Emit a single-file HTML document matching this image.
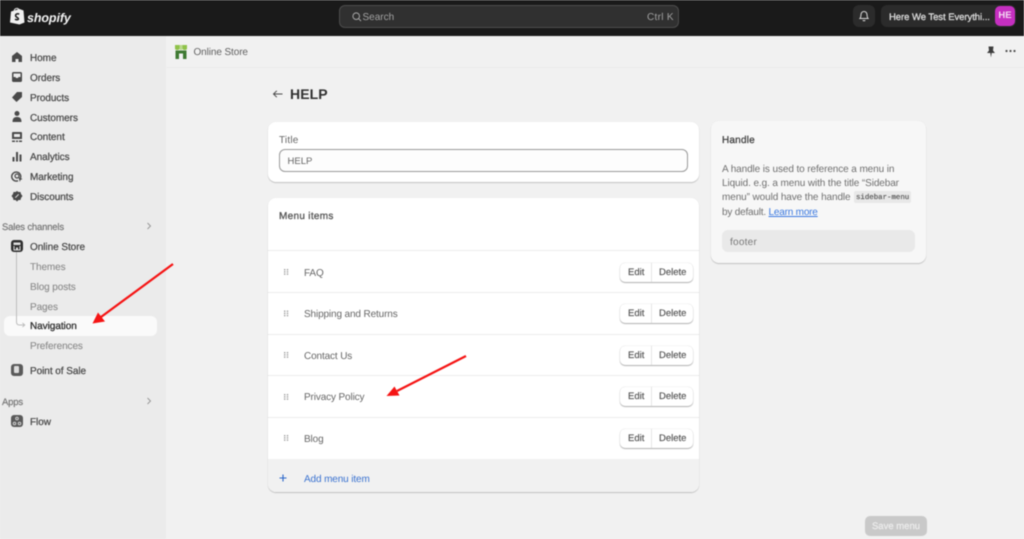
<!DOCTYPE html>
<html><head><meta charset="utf-8"><title>Shopify - Navigation</title>
<style>
html,body{margin:0;padding:0}
body{width:1024px;height:539px;overflow:hidden;background:#f1f1f1;position:relative;font-family:"Liberation Sans",sans-serif;text-rendering:geometricPrecision}
#w{position:absolute;left:0;top:0;width:1024px;height:539px;filter:blur(.4px);overflow:hidden}
.a{position:absolute}
.t{position:absolute;white-space:nowrap;line-height:14px;font-size:10px;color:#5c5c5c;margin-top:1.5px}
.n{color:#4a4a4a;-webkit-text-stroke:.25px #4a4a4a;letter-spacing:-.05px}
.s{color:#8a8a8a;-webkit-text-stroke:.1px #8a8a8a;letter-spacing:-.1px}
.h{color:#777;-webkit-text-stroke:.2px #777;font-size:9.5px;letter-spacing:-.18px}
.m{color:#666;letter-spacing:-.13px;font-size:10px}
.d{color:#6f6f6f;font-size:10px;letter-spacing:-.1px}
.card{position:absolute;background:#fff;border-radius:8px;box-shadow:0 1px 1px rgba(0,0,0,.2),0 0 1px rgba(0,0,0,.06)}
.sep{position:absolute;left:268px;width:431px;height:1px;background:#ececec}
.btn{position:absolute;left:620px;width:73px;height:19px;background:#fff;border-radius:5px;box-shadow:0 1px 1px rgba(0,0,0,.28),0 0 1px rgba(0,0,0,.25)}
.btn i{position:absolute;left:31px;top:0;width:1px;height:19px;background:#e6e6e6}
.btn b{position:absolute;top:3px;font-weight:normal;font-size:9.5px;line-height:14px;color:#555;-webkit-text-stroke:.15px #555}
svg{position:absolute;overflow:visible}
</style></head><body><div id="w">

<!-- top bar -->
<div class="a" style="left:0;top:0;width:1024px;height:36px;background:#1a1a1a"></div>
<svg style="left:10px;top:7px" width="15" height="18" viewBox="0 0 15 18"><path d="M1 4.5 L9.5 2 L13.500 3.500 L14.500 15.500 L9.500 17.500 L0 15.500Z" fill="#f0f0f0"/><path d="M4 5 C4 1 8 0 9.500 3.500" fill="none" stroke="#f0f0f0" stroke-width="1"/><path d="M9.200 7.200 C7.500 6.300 5.600 7 5.600 8.600 C5.600 10.400 8.400 10.400 8.400 11.800 C8.400 13 6.400 13 5 12.100" fill="none" stroke="#1a1a1a" stroke-width="1.500"/></svg>
<div class="t" style="left:27px;top:8px;font-size:12.500px;font-weight:bold;font-style:italic;color:#f2f2f2;line-height:16px;letter-spacing:-.1px">shopify</div>

<div class="a" style="left:339px;top:5px;width:338px;height:21px;background:#303030;border:1px solid #4c4c4c;border-radius:6px"></div>
<svg style="left:352px;top:12px" width="10" height="10" viewBox="0 0 10 10"><circle cx="4.200" cy="4.200" r="3.300" fill="none" stroke="#a8a8a8" stroke-width="1"/><path d="M6.800 6.800L9 9" stroke="#a8a8a8" stroke-width="1"/></svg>
<div class="t" style="left:362.500px;top:9px;color:#a3a3a3;font-size:10px">Search</div>
<div class="t" style="left:647px;top:9px;color:#a3a3a3;font-size:10px;letter-spacing:.3px">Ctrl K</div>

<div class="a" style="left:853px;top:5px;width:22px;height:22px;background:#2b2b2b;border-radius:6px"></div>
<svg style="left:858px;top:10px" width="12" height="12" viewBox="0 0 12 12"><path d="M2 8.500 C3 7.500 2.800 6 3 4.500 C3.300 2.500 4.500 1.500 6 1.500 C7.500 1.500 8.700 2.500 9 4.500 C9.200 6 9 7.500 10 8.500Z" fill="none" stroke="#d8d8d8" stroke-width="1"/><path d="M4.800 10.200 C5.300 11 6.700 11 7.200 10.200" fill="none" stroke="#d8d8d8" stroke-width="1"/></svg>
<div class="a" style="left:881px;top:5px;width:135px;height:22px;background:#2b2b2b;border-radius:6px"></div>
<div class="t" style="left:889px;top:9px;color:#dcdcdc;font-size:9.500px;-webkit-text-stroke:.3px #dcdcdc;letter-spacing:-.05px">Here We Test Everythi...</div>
<div class="a" style="left:995px;top:6px;width:20px;height:20px;background:#c52fc0;border-radius:5px;color:#f3d6f2;font-size:9.500px;font-weight:bold;line-height:20px;text-align:center">HE</div>

<!-- sidebar -->
<div class="a" style="left:0;top:36px;width:166px;height:503px;background:#ebebeb"></div>
<svg style="left:11px;top:51px" width="12" height="190" viewBox="0 0 12 190" fill="#4a4a4a">
<path d="M6 1 L11 5 V11 H7.500 V8 H4.500 V11 H1 V5Z"/>
<path fill-rule="evenodd" d="M2.500 21 H9.500 A1.500 1.500 0 0 1 11 22.500 V29.500 A1.500 1.500 0 0 1 9.500 31 H2.500 A1.500 1.500 0 0 1 1 29.500 V22.500 A1.500 1.500 0 0 1 2.500 21Z M2.500 22.500 V26 H4.500 L5 27 H7 L7.500 26 H9.500 V22.500Z"/>
<path d="M6 41 H10.500 A.5 .5 0 0 1 11 41.500 V46 L5.500 51 L1 46.500Z"/>
<circle cx="6" cy="62.500" r="2.500"/><path d="M1.500 71 C1.500 67 3.500 66 6 66 C8.500 66 10.500 67 10.500 71Z"/>
<path fill-rule="evenodd" d="M2 81 H10 A1 1 0 0 1 11 82 V88 H1 V82 A1 1 0 0 1 2 81Z M3 83 V86 H9 V83Z"/><path d="M1 89.500 H4 V91 H1Z M5 89.500 H7 V91 H5Z M8 89.500 H11 V91 H8Z"/>
<path d="M1.500 106 H3.500 V110.500 H1.500Z M5 101 H7 V110.500 H5Z M8.500 103.500 H10.500 V110.500 H8.500Z"/>
<path fill="none" stroke="#4a4a4a" stroke-width="1.400" d="M9.500 127 A4.500 4.500 0 1 0 7 129.700"/><circle cx="6" cy="125" r="2" fill="none" stroke="#4a4a4a" stroke-width="1.200"/><path d="M7.500 126 L11.500 128 L9.500 129 L8.800 131Z"/>
<path d="M6 140 L7.500 141 L9.500 141 L10 143 L11.500 145 L10 147 L9.500 149 L7.500 149 L6 150.500 L4.500 149 L2.500 149 L2 147 L.5 145 L2 143 L2.500 141 L4.500 141Z"/><path d="M4.300 146.700 L7.700 143.300" stroke="#ebebeb" stroke-width=".9"/>
</svg>
<div class="t n" style="left:30px;top:50px">Home</div>
<div class="t n" style="left:30px;top:70px">Orders</div>
<div class="t n" style="left:30px;top:90px">Products</div>
<div class="t n" style="left:30px;top:110px">Customers</div>
<div class="t n" style="left:30px;top:129px">Content</div>
<div class="t n" style="left:30px;top:149px">Analytics</div>
<div class="t n" style="left:30px;top:169px">Marketing</div>
<div class="t n" style="left:30px;top:189px">Discounts</div>

<div class="t h" style="left:2px;top:219px">Sales channels</div>
<svg style="left:146px;top:222px" width="6" height="8" viewBox="0 0 6 8"><path d="M1.500 1 L4.500 4 L1.500 7" fill="none" stroke="#999" stroke-width="1"/></svg>
<div class="a" style="left:11px;top:240px;width:12px;height:12px;background:#303030;border-radius:3px"></div>
<svg style="left:11px;top:240px" width="12" height="12" viewBox="0 0 12 12"><path d="M2.500 2.500 H9.500 V5 H2.500Z" fill="#ddd"/><path d="M3 6 V10 H9 V6" fill="none" stroke="#ddd" stroke-width="1"/><rect x="5" y="7.500" width="2" height="2.500" fill="#ddd"/></svg>
<div class="t n" style="left:30px;top:239px">Online Store</div>
<div class="t s" style="left:30px;top:259px">Themes</div>
<div class="t s" style="left:30px;top:279px">Blog posts</div>
<div class="t s" style="left:30px;top:299px">Pages</div>
<div class="a" style="left:4px;top:315.500px;width:153px;height:20px;background:#fafafa;border-radius:6px"></div>
<svg style="left:15px;top:252px" width="12" height="78" viewBox="0 0 12 78"><path d="M1.500 0 V70 Q1.500 73 4.500 73 H9.500" fill="none" stroke="#bdbdbd" stroke-width="1"/><path d="M7.500 71 L9.800 73 L7.500 75" fill="none" stroke="#bdbdbd" stroke-width=".9"/></svg>
<div class="t n" style="left:30px;top:318px;color:#333;-webkit-text-stroke:.3px #333">Navigation</div>
<div class="t s" style="left:30px;top:338px">Preferences</div>
<div class="a" style="left:11px;top:364px;width:12px;height:12px;background:#5a5a5a;border-radius:3px"></div>
<div class="a" style="left:14px;top:366px;width:5px;height:7px;background:#ddd;border-radius:1px"></div>
<div class="t n" style="left:30px;top:363px">Point of Sale</div>
<div class="t h" style="left:2px;top:394px">Apps</div>
<svg style="left:146px;top:397px" width="6" height="8" viewBox="0 0 6 8"><path d="M1.500 1 L4.500 4 L1.500 7" fill="none" stroke="#999" stroke-width="1"/></svg>
<div class="a" style="left:11px;top:415px;width:12px;height:12px;background:#5a5a5a;border-radius:3px"></div>
<svg style="left:11px;top:415px" width="12" height="12" viewBox="0 0 12 12" fill="none" stroke="#ddd" stroke-width=".9"><circle cx="6" cy="3.500" r="1.300"/><circle cx="3.500" cy="8.500" r="1.300"/><circle cx="8.500" cy="8.500" r="1.300"/></svg>
<div class="t n" style="left:30px;top:414px">Flow</div>

<!-- header strip -->
<div class="a" style="left:166px;top:36px;width:858px;height:31px;background:#f1f1f1;border-bottom:1px solid #ebebeb"></div>
<svg style="left:174px;top:45px" width="14" height="14" viewBox="0 0 14 14"><path d="M1 0 H5.500 V3.500 Q5.500 5 3.300 5 Q1 5 1 3.500Z M8.500 0 H13 V3.500 Q13 5 10.700 5 Q8.500 5 8.500 3.500Z" fill="#8fc24a"/><path d="M5.500 0 H8.500 V3.500 Q8.500 5 7 5 Q5.500 5 5.500 3.500Z" fill="#b9d98a"/><path d="M1.500 5.500 H12.500 V14 H9 V8.500 H5 V14 H1.500Z" fill="#3f7a33"/></svg>
<div class="t" style="left:193.500px;top:44.500px;color:#5f5f5f;font-size:10px;letter-spacing:-.1px">Online Store</div>
<svg style="left:986px;top:46px" width="10" height="12" viewBox="0 0 10 12"><path d="M2.500 .5 H7.500 L7 4.500 L9 7 H5.700 L5 11.500 L4.300 7 H1 L3 4.500Z" fill="#3d3d3d"/></svg>
<svg style="left:1005px;top:49px" width="11" height="4" viewBox="0 0 11 4" fill="#4a4a4a"><circle cx="1.500" cy="2" r="1.100"/><circle cx="5.500" cy="2" r="1.100"/><circle cx="9.500" cy="2" r="1.100"/></svg>

<!-- page title -->
<svg style="left:272px;top:89px" width="11" height="10" viewBox="0 0 11 10"><path d="M10.500 5 H1.500 M4.800 1.800 L1.500 5 L4.800 8.200" fill="none" stroke="#4a4a4a" stroke-width="1"/></svg>
<div class="t" style="left:290px;top:85px;margin-top:0;font-size:14px;font-weight:bold;color:#303030;line-height:18px;letter-spacing:.1px">HELP</div>

<!-- title card -->
<div class="card" style="left:268px;top:122px;width:431px;height:60px"></div>
<div class="t" style="left:279px;top:132px;color:#666;letter-spacing:.2px">Title</div>
<div class="a" style="left:279px;top:149px;width:407px;height:21px;background:#fdfdfd;border:1px solid #9a9a9a;border-radius:6px"></div>
<div class="t" style="left:287.500px;top:153px;color:#666;font-size:9.500px">HELP</div>

<!-- menu card -->
<div class="card" style="left:268px;top:198px;width:431px;height:294px;overflow:hidden"><div class="a" style="left:0;top:261px;width:431px;height:33px;background:#f1f1f1"></div></div>
<div class="t" style="left:279px;top:208px;color:#555;-webkit-text-stroke:.3px #555;font-size:10px;letter-spacing:.3px">Menu items</div>
<div class="sep" style="top:250px"></div>
<div class="sep" style="top:292px"></div>
<div class="sep" style="top:334px"></div>
<div class="sep" style="top:375px"></div>
<div class="sep" style="top:417px"></div>

<svg style="left:284px;top:269px" width="5" height="175" viewBox="0 0 5 175" fill="#a0a0a0">
<g id="g1"><rect x="0" y="0" width="1.400" height="1.400"/><rect x="2.800" y="0" width="1.400" height="1.400"/><rect x="0" y="2.200" width="1.400" height="1.400"/><rect x="2.800" y="2.200" width="1.400" height="1.400"/><rect x="0" y="4.400" width="1.400" height="1.400"/><rect x="2.800" y="4.400" width="1.400" height="1.400"/></g>
<use href="#g1" y="41.500"/><use href="#g1" y="83"/><use href="#g1" y="125"/><use href="#g1" y="166"/>
</svg>

<div class="t m" style="left:304px;top:265px">FAQ</div>
<div class="t m" style="left:304px;top:306.500px">Shipping and Returns</div>
<div class="t m" style="left:304px;top:348px">Contact Us</div>
<div class="t m" style="left:304px;top:389.500px">Privacy Policy</div>
<div class="t m" style="left:304px;top:431px">Blog</div>

<div class="btn" style="top:262.500px"><i></i><b style="left:8px">Edit</b><b style="left:39px">Delete</b></div>
<div class="btn" style="top:304px"><i></i><b style="left:8px">Edit</b><b style="left:39px">Delete</b></div>
<div class="btn" style="top:345.500px"><i></i><b style="left:8px">Edit</b><b style="left:39px">Delete</b></div>
<div class="btn" style="top:387px"><i></i><b style="left:8px">Edit</b><b style="left:39px">Delete</b></div>
<div class="btn" style="top:428.500px"><i></i><b style="left:8px">Edit</b><b style="left:39px">Delete</b></div>

<svg style="left:279px;top:474px" width="8" height="8" viewBox="0 0 8 8"><path d="M4 .5 V7.500 M.5 4 H7.500" stroke="#2a66c9" stroke-width="1.100"/></svg>
<div class="t" style="left:304px;top:471px;color:#3a72d0;letter-spacing:-.12px">Add menu item</div>

<!-- handle card -->
<div class="card" style="left:711px;top:121px;width:215px;height:142px;background:#f7f7f7"></div>
<div class="t" style="left:722px;top:132px;color:#444;-webkit-text-stroke:.3px #444;letter-spacing:.2px">Handle</div>
<div class="t d" style="left:722px;top:161px">A handle is used to reference a menu in</div>
<div class="t d" style="left:722px;top:175px">Liquid. e.g. a menu with the title “Sidebar</div>
<div class="t d" style="left:722px;top:189px">menu” would have the handle</div>
<div class="a" style="left:854px;top:191px;width:57px;height:12px;background:#e8e8e8;border-radius:2px"></div>
<div class="t" style="left:856px;top:189px;font-family:'Liberation Mono',monospace;font-size:7.400px;color:#555;-webkit-text-stroke:.15px #555">sidebar-menu</div>
<div class="t d" style="left:722px;top:204px;letter-spacing:-.2px">by default. <span style="color:#3a78e0;text-decoration:underline">Learn more</span></div>
<div class="a" style="left:722px;top:230px;width:193px;height:22px;background:#e9e9e9;border-radius:6px"></div>
<div class="t" style="left:730px;top:234px;color:#777;letter-spacing:.25px">footer</div>

<!-- save -->
<div class="a" style="left:865px;top:516px;width:62px;height:20px;background:#c9c9c9;border-radius:5px;color:#ececec;font-size:9.500px;-webkit-text-stroke:.25px #ececec;line-height:21px;text-align:center">Save menu</div>

<!-- annotation arrows -->
<svg style="left:0;top:0" width="1024" height="539" viewBox="0 0 1024 539">
<path d="M173 264 L101 317" stroke="#f51414" stroke-width="2.200" fill="none"/>
<path d="M92.500 323.500 L98 312.500 L105 321.500Z" fill="#f51414"/>
<path d="M466 356 L397 391" stroke="#f51414" stroke-width="2.200" fill="none"/>
<path d="M386.500 396 L394.500 386.500 L399.500 395.500Z" fill="#f51414"/>
</svg>

</div></body></html>
